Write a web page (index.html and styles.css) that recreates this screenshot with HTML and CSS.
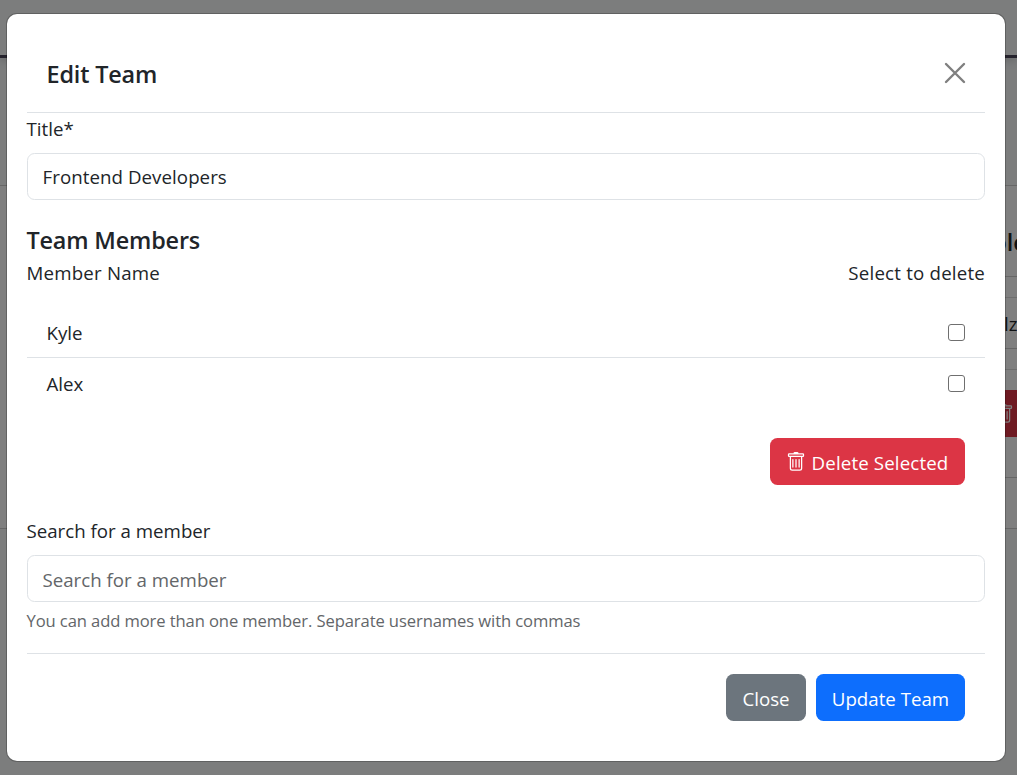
FILE: index.html
```html
<!DOCTYPE html>
<html lang="en">
<head>
<meta charset="utf-8">
<title>Edit Team</title>
<link rel="stylesheet" href="styles.css">
</head>
<body>
<svg class="defs" width="0" height="0" aria-hidden="true">
  <symbol id="trash" viewBox="0 0 16 16">
    <path fill="currentColor" d="M5.5 5.5A.5.5 0 0 1 6 6v6a.5.5 0 0 1-1 0V6a.5.5 0 0 1 .5-.5m2.5 0a.5.5 0 0 1 .5.5v6a.5.5 0 0 1-1 0V6a.5.5 0 0 1 .5-.5m3 .5a.5.5 0 0 0-1 0v6a.5.5 0 0 0 1 0z"/>
    <path fill="currentColor" d="M14.5 3a1 1 0 0 1-1 1H13v9a2 2 0 0 1-2 2H5a2 2 0 0 1-2-2V4h-.5a1 1 0 0 1-1-1V2a1 1 0 0 1 1-1H6a1 1 0 0 1 1-1h2a1 1 0 0 1 1 1h3.5a1 1 0 0 1 1 1zM4.118 4 4 4.059V13a1 1 0 0 0 1 1h6a1 1 0 0 0 1-1V4.059L11.882 4zM2.5 3h11V2h-11z"/>
  </symbol>
</svg>
<div class="page">
  <div class="navbar"></div>
  <div class="card">
    <div class="card-title">ole</div>
    <div class="card-gap"></div>
    <div class="card-row">lz</div>
    <div class="card-gap"></div>
    <div class="card-action"><svg class="icon"><use href="#trash"/></svg></div>
    <div class="card-end"></div>
  </div>
</div>
<div class="backdrop">
  <form class="modal">
    <header class="modal-header">
      <h5 class="heading">Edit Team</h5>
      <svg class="close" viewBox="0 0 20 20"><path d="M1 1 19 19M19 1 1 19"/></svg>
    </header>
    <label class="label" for="title">Title*</label>
    <input class="control filled" id="title" type="text" value="Frontend Developers">
    <h5 class="heading members">Team Members</h5>
    <div class="columns"><span>Member Name</span><span>Select to delete</span></div>
    <div class="list">
      <div class="row"><span>Kyle</span><input class="check" type="checkbox"></div>
      <div class="row"><span>Alex</span><input class="check" type="checkbox"></div>
    </div>
    <div class="delete"><button class="btn danger" type="button"><svg class="icon"><use href="#trash"/></svg><span>Delete Selected</span></button></div>
    <label class="label" for="search">Search for a member</label>
    <input class="control" id="search" type="text" placeholder="Search for a member">
    <div class="help">You can add more than one member. Separate usernames with commas</div>
    <footer class="modal-footer">
      <button class="btn secondary" type="button">Close</button>
      <button class="btn primary" type="button">Update Team</button>
    </footer>
  </form>
</div>
</body>
</html>
```
FILE: styles.css
```css
* { box-sizing: border-box; }
body {
  margin: 0;
  height: 775px;
  overflow: hidden;
  position: relative;
  background: #f8fafb;
  color: #212529;
  font: 18.7px/30px "Open Sans", "Noto Sans", sans-serif;
}
.defs { position: absolute; }

.page { display: flex; flex-direction: column; height: 775px; }
.navbar {
  height: 58px;
  border-bottom: 3px solid #4a4458;
  box-shadow: 0 3px 8px rgba(0, 0, 0, .15);
}
.card {
  margin-top: 127px;
  height: 344px;
  padding-left: 700px;
  background: #fff;
  border: solid #cfcfcf;
  border-width: 1px 0;
  display: flex;
  flex-direction: column;
}
.card > * { padding-left: 294px; white-space: nowrap; flex: none; }
.card > .card-title { height: 91px; padding: 41px 0 0 292.5px; font-size: 23.4px; font-weight: 600; border-bottom: 1px solid #ccc; }
.card-gap { height: 21px; border-bottom: 1px solid #ddd; }
.card-row { height: 51px; padding-top: 11px; border-bottom: 1px solid #ccc; }
.card > .card-row { padding-left: 304px; }
.card-action { height: 47px; margin-top: 20px; padding-top: 14px; background: #dc3545; color: #fff; }
.card-action .icon { display: block; }
.card-end { height: 41px; border-bottom: 1px solid #ccc; }

.backdrop {
  position: absolute;
  inset: 0;
  padding: 14px 12px 14px 7px;
  background: rgba(0, 0, 0, .5);
}
.modal {
  height: 747px;
  padding: 20px;
  background: #fff;
  border-radius: 10px;
  box-shadow: 0 0 0 1px rgba(0, 0, 0, .22);
}
.modal-header {
  height: 79px;
  padding: 2px 20px 0;
  display: flex;
  align-items: center;
  justify-content: space-between;
  border-bottom: 1px solid #dee2e6;
}
.heading { margin: 0 0 0 -.5px; font-size: 23.4px; font-weight: 600; line-height: 30px; letter-spacing: -.16px; }
.close { width: 20px; height: 20px; margin-bottom: 2px; overflow: visible; }
.close path { stroke: #7f7f7f; stroke-width: 2.4; stroke-linecap: round; fill: none; }
.label { display: block; height: 30px; margin: 1px 0 9px -.5px; }
.control {
  display: block;
  width: 100%;
  height: 47px;
  padding: 2px 14.5px 0;
  border: 1px solid #dee2e6;
  border-radius: 7.5px;
  background: #fff;
  color: #212529;
  font: inherit;
}
.filled { padding: 0 14.5px; letter-spacing: .06px; }
.control::placeholder { color: #636669; opacity: 1; }
.members { margin-top: 25px; }
.columns { display: flex; justify-content: space-between; margin: 3px 0 0 -.5px; letter-spacing: .2px; }
.list { margin-top: 19px; }
.row {
  height: 50px;
  padding: 2px 20px 0 19.5px;
  display: flex;
  align-items: center;
  justify-content: space-between;
}
.row + .row { height: 51px; border-top: 1px solid #dee2e6; }
.check {
  appearance: none;
  width: 17px;
  height: 17px;
  margin: 0 0 2px;
  border: 1px solid #6f6f6f;
  border-radius: 3px;
}
.delete { display: flex; justify-content: flex-end; padding: 30px 20px 30px; }
.btn {
  height: 47px;
  padding: 3px 0 0;
  display: flex;
  align-items: center;
  justify-content: center;
  border: 0;
  border-radius: 7.5px;
  color: #fff;
  font: inherit;
  white-space: nowrap;
}
.icon { width: 20px; height: 20px; flex: none; }
.danger { width: 195px; gap: 6px; background: #dc3545; letter-spacing: .14px; }
.danger .icon { margin: 0 0 2px -1px; }
.secondary { width: 80px; background: #6c757d; }
.primary { width: 149px; background: #0d6efd; }
.help { height: 27px; margin: 5px 0 0 -.5px; font-size: 16.6px; line-height: 27px; letter-spacing: -.105px; color: #636669; white-space: nowrap; }
.modal-footer {
  display: flex;
  justify-content: flex-end;
  gap: 10px;
  margin-top: 19px;
  padding: 20px 20px 0;
  border-top: 1px solid #dee2e6;
}
```
